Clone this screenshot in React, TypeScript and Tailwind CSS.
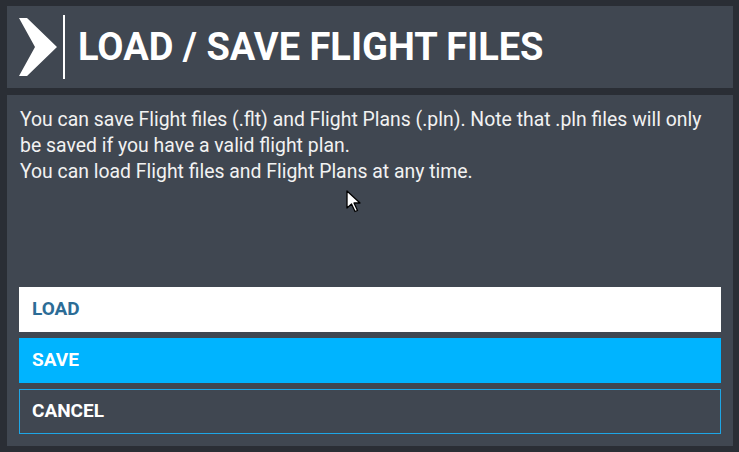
import React from "react";

export default function App() {
  return (
    <div
      className="relative w-[739px] h-[452px] bg-[#2a2e35] p-[6px] pl-[7px] flex flex-col gap-[7px]"
      style={{ fontFamily: "Roboto, 'Liberation Sans', sans-serif" }}
    >
      <div className="h-[82px] w-[726px] bg-[#404751] flex items-center pl-[12px]">
        <svg width="38" height="58" viewBox="0 0 38 58" className="shrink-0">
          <polygon points="0,0 8,0 38,29 8,58 0,58 16,29" fill="#ffffff" />
        </svg>
        <div className="ml-[6px] w-[2px] h-[64px] bg-white shrink-0" />
        <h1 className="ml-[13px] text-[38px] leading-none font-bold text-white">
          LOAD / SAVE FLIGHT FILES
        </h1>
      </div>
      <div className="h-[351px] w-[726px] bg-[#404751] flex flex-col p-[12px]">
        <p className="text-[19.4px] leading-[26px] text-[#f2f2f2] pl-[1px] whitespace-nowrap">
          You can save Flight files (.flt) and Flight Plans (.pln). Note that .pln files will only
          <br />
          be saved if you have a valid flight plan.
          <br />
          You can load Flight files and Flight Plans at any time.
        </p>
        <div className="mt-auto flex flex-col gap-[6px]">
          <button className="h-[45px] w-full bg-white text-left pl-[13px] text-[19px] font-bold text-[#2c6c96]">
            LOAD
          </button>
          <button className="h-[45px] w-full bg-[#00b4ff] text-left pl-[13px] text-[19px] font-bold text-white">
            SAVE
          </button>
          <button className="h-[45px] w-full border border-[#1ea6e6] text-left pl-[12px] text-[19px] font-bold text-white">
            CANCEL
          </button>
        </div>
      </div>
      <svg
        className="absolute left-[346px] top-[190px]"
        width="18"
        height="24"
        viewBox="0 0 18 24"
      >
        <path
          d="M1 1 L1 18 L5.5 14 L9 21.5 L11.5 20.5 L8 13 L14 13 Z"
          fill="#ffffff"
          stroke="#000000"
          strokeWidth="1.3"
          strokeLinejoin="round"
        />
      </svg>
    </div>
  );
}
